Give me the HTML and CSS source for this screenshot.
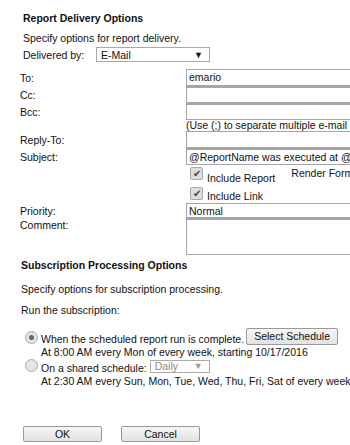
FILE: index.html
```html
<!DOCTYPE html>
<html lang="en-US">
<head>
    <meta charset="UTF-8">
    <title>Report Delivery Options</title>
<link rel="stylesheet" href="styles.css">
</head>
<body>
<div class=delivery>
  <h3 class=head>Report Delivery Options</h3>
  <div class=intro>Specify options for report delivery.</div>
  <div class=by>
    <span class=bylabel>Delivered by:</span>
    <div class="select email">E-Mail<span class=arrow>&#9660;</span></div>
  </div>
</div>

<div class=fields>
  <div class=lab>To:</div>      <div class="box first">emario</div>
  <div class=lab>Cc:</div>      <div class=box></div>
  <div class=lab>Bcc:</div>     <div class=box></div>
  <div></div>                   <div class=hint>(Use (;) to separate multiple e-mail addresses.)</div>
  <div class=lab>Reply-To:</div><div class="box first"></div>
  <div class=lab>Subject:</div> <div class=box>@ReportName was executed at @ExecutionTime</div>
  <div></div>
  <div class=checks>
    <span class=chk>&#10004;</span><span class=chktext>Include Report</span>
    <span class=render>Render Format:</span>
  </div>
  <div></div>
  <div class="checks link">
    <span class=chk>&#10004;</span><span class=chktext>Include Link</span>
  </div>
  <div class=lab>Priority:</div><div class="box first prio">Normal</div>
  <div class="lab top">Comment:</div><div class="box area"></div>
</div>

<div class=processing>
  <h3 class=head>Subscription Processing Options</h3>
  <div class=intro>Specify options for subscription processing.</div>
  <div class=run>Run the subscription:</div>
  <div class=opt>
    <span class="radio on"></span>
    <div>
      <div class=optline>When the scheduled report run is complete.<span class=btn>Select Schedule</span></div>
      <div class=line>At 8:00 AM every Mon of every week, starting 10/17/2016</div>
    </div>
  </div>
  <div class="opt second">
    <span class=radio></span>
    <div>
      <div class=optline>On a shared schedule: <div class="select daily">Daily<span class=arrow>&#9660;</span></div></div>
      <div class=line>At 2:30 AM every Sun, Mon, Tue, Wed, Thu, Fri, Sat of every week, starting 10/17/2016</div>
    </div>
  </div>
</div>

<div class=buttons>
  <span class="btn big">OK</span>
  <span class="btn big">Cancel</span>
</div>
</body>
</html>
```
FILE: styles.css
```css
    body {
      margin: 0;
      width: 350px;
      height: 445px;
      overflow: hidden;
      background: white;
      font: 10.5px "Liberation Sans", Arial, sans-serif;
      color: #111;
      white-space: nowrap;
    }
    .head {
      margin: 0;
      font-size: 10.5px;
      font-weight: bold;
    }
    .delivery {
      padding: 12px 0 0 23px;
    }
    .delivery .intro {
      margin-top: 8px;
    }
    .by {
      display: flex;
      align-items: center;
      margin-top: 3px;
    }
    .bylabel {
      width: 73px;
    }
    .select {
      display: inline-flex;
      align-items: center;
      justify-content: space-between;
      box-sizing: border-box;
      border: 1px solid #aaa;
      background: white;
      padding: 0 6px 0 4px;
    }
    .email {
      width: 114px;
      height: 15px;
    }
    .arrow {
      font-size: 9px;
    }
    .fields {
      display: grid;
      grid-template-columns: 166px 200px;
      margin: 7px 0 0 20px;
    }
    .lab {
      display: flex;
      align-items: center;
    }
    .lab.top {
      align-items: flex-start;
      margin-top: 1px;
    }
    .box {
      box-sizing: border-box;
      height: 17px;
      border: 1px solid #a6a6a6;
      border-top-width: 2px;
      padding-left: 2px;
      line-height: 14px;
    }
    .box.first {
      border-top-width: 1px;
      line-height: 15px;
    }
    .hint {
      height: 11px;
      line-height: 11px;
    }
    .checks {
      display: flex;
      align-items: flex-start;
      height: 21px;
      padding: 2px 0 0 4px;
      box-sizing: border-box;
    }
    .checks.link {
      height: 17px;
      padding-top: 1px;
    }
    .chk {
      box-sizing: border-box;
      width: 13px;
      height: 13px;
      border: 1px solid #aaa;
      border-radius: 2px;
      background: #ddd;
      color: #444;
      font-size: 10px;
      line-height: 11px;
      text-align: center;
    }
    .chktext {
      margin: 5px 0 0 4px;
    }
    .checks.link .chktext {
      margin-top: 3px;
    }
    .render {
      margin-left: 16px;
    }
    .prio {
      height: 15px;
      line-height: 13px;
    }
    .area {
      height: 37px;
      border-top-width: 2px;
    }
    .processing {
      padding: 4px 0 0 21px;
    }
    .processing .intro {
      margin-top: 12px;
    }
    .run {
      margin-top: 9px;
      line-height: 12px;
    }
    .opt {
      display: flex;
      align-items: flex-start;
      margin: 17px 0 0 4px;
    }
    .opt.second {
      margin-top: 4px;
    }
    .radio {
      flex-shrink: 0;
      box-sizing: border-box;
      width: 13px;
      height: 13px;
      border: 1px solid #aaa;
      border-radius: 50%;
      background: #e4e4e4;
      margin: -2px 3px 0 0;
      display: flex;
      align-items: center;
      justify-content: center;
    }
    .opt.second .radio {
      margin-top: -3px;
    }
    .radio.on::after {
      content: "";
      width: 5px;
      height: 5px;
      border-radius: 50%;
      background: #666;
    }
    .optline {
      display: flex;
      align-items: flex-end;
      height: 13px;
      line-height: 14px;
    }
    .line {
      line-height: 12px;
    }
    .btn {
      display: inline-block;
      box-sizing: border-box;
      border: 1px solid #999;
      border-radius: 2px;
      background: linear-gradient(#f6f6f6, #e2e2e2);
      text-align: center;
    }
    .optline .btn {
      flex-shrink: 0;
      width: 92px;
      height: 17px;
      line-height: 15px;
      margin: 0 0 1px 2px;
    }
    .daily {
      flex-shrink: 0;
      width: 60px;
      height: 13px;
      line-height: 11px;
      margin: 0 0 2px 3px;
      color: #888;
    }
    .daily .arrow {
      color: #999;
    }
    .buttons {
      display: flex;
      gap: 19px;
      margin: 39px 0 0 23px;
    }
    .btn.big {
      width: 79px;
      height: 16px;
      line-height: 14px;
    }
```
